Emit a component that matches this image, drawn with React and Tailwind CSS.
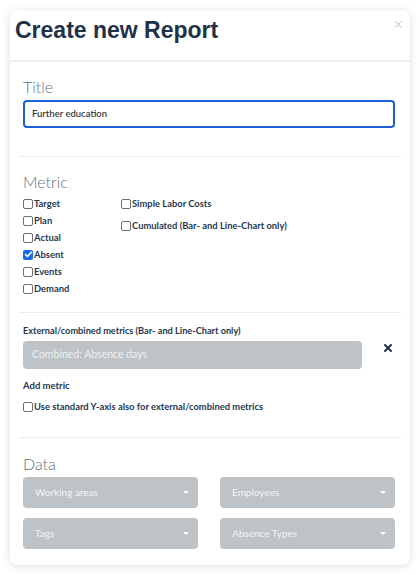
import { Check, X } from 'lucide-react';

const LATO = { fontFamily: 'Lato, "Open Sans", sans-serif' };

function Box({ checked }) {
    return checked ? (
        <span className="w-[10px] h-[10px] rounded-[2px] bg-[#1a6ce6] flex items-center justify-center flex-shrink-0">
            <Check className="w-[9px] h-[9px] text-white" strokeWidth={4} />
        </span>
    ) : (
        <span className="w-[10px] h-[10px] rounded-[2px] border border-[#6b6f73] bg-white flex-shrink-0" />
    );
}

function CheckRow({ label, checked, className = 'h-[17px]' }) {
    return (
        <div className={`flex items-center gap-[1px] ${className}`}>
            <Box checked={checked} />
            <span className="text-[9.4px] font-bold text-[#26384d] leading-none">{label}</span>
        </div>
    );
}

function SectionLabel({ children, className = '' }) {
    return <p className={`text-[16px] leading-[20px] font-light text-[#627181] ${className}`}>{children}</p>;
}

function Select({ label }) {
    return (
        <div className="h-[31px] rounded-[4px] bg-[#bec3c7] flex items-center justify-between pl-[12px] pr-[9px]">
            <span className="text-[10px] text-[#f4f5f6]">{label}</span>
            <span className="w-0 h-0 border-l-[3px] border-r-[3px] border-t-[3px] border-l-transparent border-r-transparent border-t-white" />
        </div>
    );
}

const LEFT = [
    { label: 'Target' },
    { label: 'Plan' },
    { label: 'Actual' },
    { label: 'Absent', checked: true },
    { label: 'Events' },
    { label: 'Demand' },
];

export default function App() {
    return (
        <div className="min-h-screen bg-white p-[10px] pb-[10px]" style={LATO}>
            <div className="w-[400px] rounded-[8px] bg-white shadow-[0_1px_10px_rgba(0,0,0,0.13)]">
                <div className="h-[52px] border-b-2 border-[#eeeeee] flex items-start justify-between pl-[5px] pr-[6px] pt-[9px]">
                    <h1 className="text-[23px] leading-[23px] font-bold text-[#1f3249]" style={{ fontFamily: '"Liberation Sans", Arial, sans-serif' }}>
                        Create new Report
                    </h1>
                    <X className="w-[11px] h-[11px] text-[#b0b0b0] mt-0" strokeWidth={2} />
                </div>

                <div className="px-[9px] pb-[16px]">
                    <div className="px-[4px]">
                        <SectionLabel className="mt-[15px]">Title</SectionLabel>
                        <div className="mt-[3px] h-[28px] w-[372px] rounded-[4px] border-2 border-[#1d5fd6] flex items-center px-[7px]">
                            <span className="text-[9.5px] font-semibold text-[#333a42]">Further education</span>
                        </div>
                    </div>
                    <div className="mt-[28px] h-px bg-[#ececec]" />

                    <div className="px-[4px]">
                        <SectionLabel className="mt-[15px]">Metric</SectionLabel>
                        <div className="mt-[3px] flex">
                            <div className="w-[98px]">
                                {LEFT.map((m) => (
                                    <CheckRow key={m.label} label={m.label} checked={m.checked} />
                                ))}
                            </div>
                            <div>
                                <CheckRow label="Simple Labor Costs" />
                                <CheckRow label="Cumulated (Bar- and Line-Chart only)" className="h-[17px] mt-[5px]" />
                            </div>
                        </div>
                    </div>
                    <div className="mt-[15px] h-px bg-[#ececec]" />

                    <div className="px-[4px]">
                        <p className="mt-[11px] text-[9.2px] leading-[14px] font-bold text-[#26384d]">
                            External/combined metrics (Bar- and Line-Chart only)
                        </p>
                        <div className="mt-[3px] flex items-center">
                            <div className="w-[339px] h-[28px] rounded-[4px] bg-[#bec3c7] flex items-center px-[9px]">
                                <span className="text-[10.5px] text-[#eef0f2]">Combined: Absence days</span>
                            </div>
                            <X className="w-[12px] h-[12px] text-[#1f3249] ml-[20px] -mt-[14px]" strokeWidth={4} />
                        </div>
                        <p className="mt-[10px] text-[9.5px] leading-[14px] font-bold text-[#26384d]">Add metric</p>
                        <CheckRow label="Use standard Y-axis also for external/combined metrics" className="h-[14px] mt-[7px]" />
                    </div>
                    <div className="mt-[23px] h-px bg-[#ececec]" />

                    <div className="px-[4px]">
                        <SectionLabel className="mt-[16px]">Data</SectionLabel>
                        <div className="mt-[3px] w-[372px] grid grid-cols-2 gap-x-[22px] gap-y-[10px]">
                            <Select label="Working areas" />
                            <Select label="Employees" />
                            <Select label="Tags" />
                            <Select label="Absence Types" />
                        </div>
                    </div>
                </div>
            </div>
        </div>
    );
}
